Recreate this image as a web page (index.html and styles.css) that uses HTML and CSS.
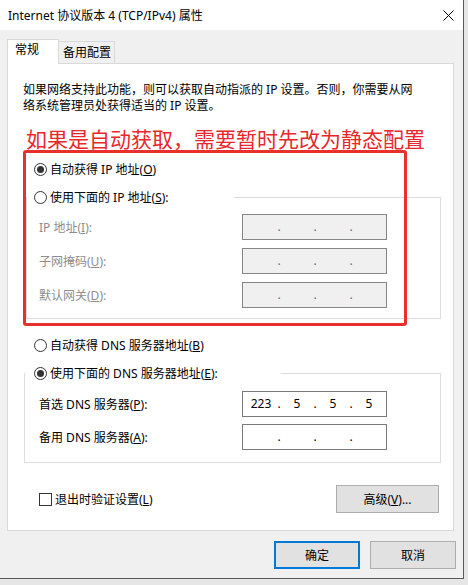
FILE: index.html
```html
<!DOCTYPE html>
<html lang="zh-CN">
<head>
    <meta charset="UTF-8">
    <title>Internet 协议版本 4 (TCP/IPv4) 属性</title>
    <link rel="stylesheet" href="styles.css">
</head>
<body>
    <div class="window">
        <div class="titlebar">
            <span>Internet 协议版本 4 (TCP/IPv4) 属性</span>
            <svg class="close" width="11" height="11" viewBox="0 0 11 11"><path d="M0.5 0.5L10.5 10.5M10.5 0.5L0.5 10.5" stroke="#000" stroke-width="1"/></svg>
        </div>
        <div class="tabs">
            <div class="tab active">常规</div>
            <div class="tab">备用配置</div>
        </div>
        <div class="panel">
            <p class="desc">如果网络支持此功能，则可以获取自动指派的 IP 设置。否则，你需要从网<br>络系统管理员处获得适当的 IP 设置。</p>
            <p class="note">如果是自动获取，需要暂时先改为静态配置</p>
            <!-- IP -->
            <div class="radio solo"><span class="dot on"></span><span>自动获得 IP 地址(<u>O</u>)</span></div>
            <fieldset class="group ip">
                <legend><span class="radio"><span class="dot"></span><span>使用下面的 IP 地址(<u>S</u>):</span></span></legend>
                <div class="rows">
                    <div class="row off">
                        <span class="label">IP 地址(<u>I</u>):</span>
                        <div class="ipbox"><span></span><span>.</span><span></span><span>.</span><span></span><span>.</span><span></span></div>
                    </div>
                    <div class="row off">
                        <span class="label">子网掩码(<u>U</u>):</span>
                        <div class="ipbox"><span></span><span>.</span><span></span><span>.</span><span></span><span>.</span><span></span></div>
                    </div>
                    <div class="row off">
                        <span class="label">默认网关(<u>D</u>):</span>
                        <div class="ipbox"><span></span><span>.</span><span></span><span>.</span><span></span><span>.</span><span></span></div>
                    </div>
                </div>
            </fieldset>
            <!-- DNS -->
            <div class="radio solo dns-first"><span class="dot"></span><span>自动获得 DNS 服务器地址(<u>B</u>)</span></div>
            <fieldset class="group dns">
                <legend><span class="radio"><span class="dot on"></span><span>使用下面的 DNS 服务器地址(<u>E</u>):</span></span></legend>
                <div class="rows">
                    <div class="row">
                        <span class="label">首选 DNS 服务器(<u>P</u>):</span>
                        <div class="ipbox"><span>223</span><span>.</span><span>5</span><span>.</span><span>5</span><span>.</span><span>5</span></div>
                    </div>
                    <div class="row">
                        <span class="label">备用 DNS 服务器(<u>A</u>):</span>
                        <div class="ipbox"><span></span><span>.</span><span></span><span>.</span><span></span><span>.</span><span></span></div>
                    </div>
                </div>
            </fieldset>
            <div class="extra">
                <div class="checkrow"><span class="check"></span><span>退出时验证设置(<u>L</u>)</span></div>
                <button class="btn adv">高级(<u>V</u>)...</button>
            </div>
            <div class="redbox"></div>
        </div>
        <div class="actions">
            <button class="btn main">确定</button>
            <button class="btn">取消</button>
        </div>
    </div>
</body>
</html>
```

FILE: styles.css
```css
*{
    box-sizing: border-box;
}
body{
    margin: 0;
    background-color: #e6e6e6;
    font-family: "Noto Sans", "Noto Sans CJK SC", sans-serif;
    font-size: 12px;
    color: #000;
}
.window{
    width: 464px; height: 579px;
    display: flex;
    flex-direction: column;
    background-color: #f0f0f0;
    border-right: 1px solid #5a5a5a;
    border-bottom: 1px solid #5a5a5a;
}
.titlebar{
    height: 30px;
    display: flex;
    align-items: center;
    justify-content: space-between;
    padding: 0 9px 0 8px;
    background-color: #fff;
}
/* pestañas */
.tabs{
    height: 24px;
    margin-top: 9px;
    padding-left: 7px;
    display: flex;
    align-items: flex-end;
}
.tab{
    width: 56px; height: 22px;
    padding: 3px 0 0 4px;
    line-height: 16px;
    border-top: 1px solid #d9d9d9;
    border-right: 1px solid #d9d9d9;
}
.tab.active{
    position: relative;
    z-index: 1;
    width: 52px; height: 25px;
    margin-bottom: -1px;
    padding: 2px 0 0 7px;
    border-left: 1px solid #d9d9d9;
    background-color: #fff;
}
.panel{
    position: relative;
    width: 447px; height: 468px;
    margin-left: 7px;
    padding: 18px 0 0 15px;
    background-color: #fff;
    border: 1px solid #d9d9d9;
}
.desc{
    margin: 0;
    line-height: 16px;
}
.note{
    margin: 12px 0 0 3px;
    font-family: "Noto Sans CJK SC", sans-serif;
    font-size: 21px;
    line-height: 24px;
    color: #e8282b;
}
/* radios */
.radio{
    height: 20px;
    display: flex;
    align-items: center;
    gap: 3px;
}
.radio.solo{
    margin-top: 9px;
    padding-left: 11px;
}
.radio.dns-first{
    margin-top: 16px;
}
.dot{
    width: 13px; height: 13px;
    display: flex;
    align-items: center;
    justify-content: center;
    border: 1px solid #333;
    border-radius: 50%;
    background-color: #fff;
}
.dot.on::after{
    content: "";
    width: 7px; height: 7px;
    border-radius: 50%;
    background-color: #333;
}
/* grupos */
.group{
    min-width: 0;
    width: 415px;
    margin: 8px 0 0 3px;
    padding: 0;
    border: 1px solid #dcdcdc;
}
.group legend{
    width: 207px; height: 20px;
    padding: 0 0 0 7px;
}
.group.dns{
    width: 417px;
    margin-left: 1px;
}
.group.dns legend{
    width: 256px;
    padding-left: 9px;
}
.rows{
    display: flex;
    flex-direction: column;
    gap: 8px;
    padding: 7px 0 10px 12px;
}
.dns .rows{
    gap: 7px;
    padding: 8px 0 12px 14px;
}
.row{
    display: flex;
    align-items: center;
}
.label{
    width: 203px;
}
.row.off .label{
    color: #8d8d8d;
}
.ipbox{
    width: 145px; height: 26px;
    display: grid;
    grid-template-columns: 30px 6px 30px 6px 30px 6px 30px;
    align-items: center;
    padding-left: 3px;
    text-align: center;
    line-height: 16px;
    border: 1px solid #7a7a7a;
    background-color: #fff;
}
.row.off .ipbox{
    border-color: #858585;
    background-color: #f0f0f0;
    color: #6d6d6d;
}
/* abajo */
.extra{
    width: 400px;
    margin: 22px 0 0 16px;
    display: flex;
    align-items: center;
    justify-content: space-between;
}
.checkrow{
    display: flex;
    align-items: center;
    gap: 3px;
}
.check{
    width: 13px; height: 13px;
    border: 1px solid #333;
}
.btn{
    width: 86px; height: 28px;
    padding: 0;
    font: inherit;
    color: #000;
    background-color: #e1e1e1;
    border: 1px solid #adadad;
}
.btn.adv{
    width: 103px;
}
.btn.main{
    border: 2px solid #0078d7;
}
.actions{
    margin-top: 10px;
    padding-right: 7px;
    display: flex;
    justify-content: flex-end;
    gap: 10px;
}
/* marco rojo de la anotación */
.redbox{
    position: absolute;
    left: 15px; top: 86px;
    width: 384px; height: 176px;
    border: 3px solid #e8302d;
    border-radius: 3px;
}
```
